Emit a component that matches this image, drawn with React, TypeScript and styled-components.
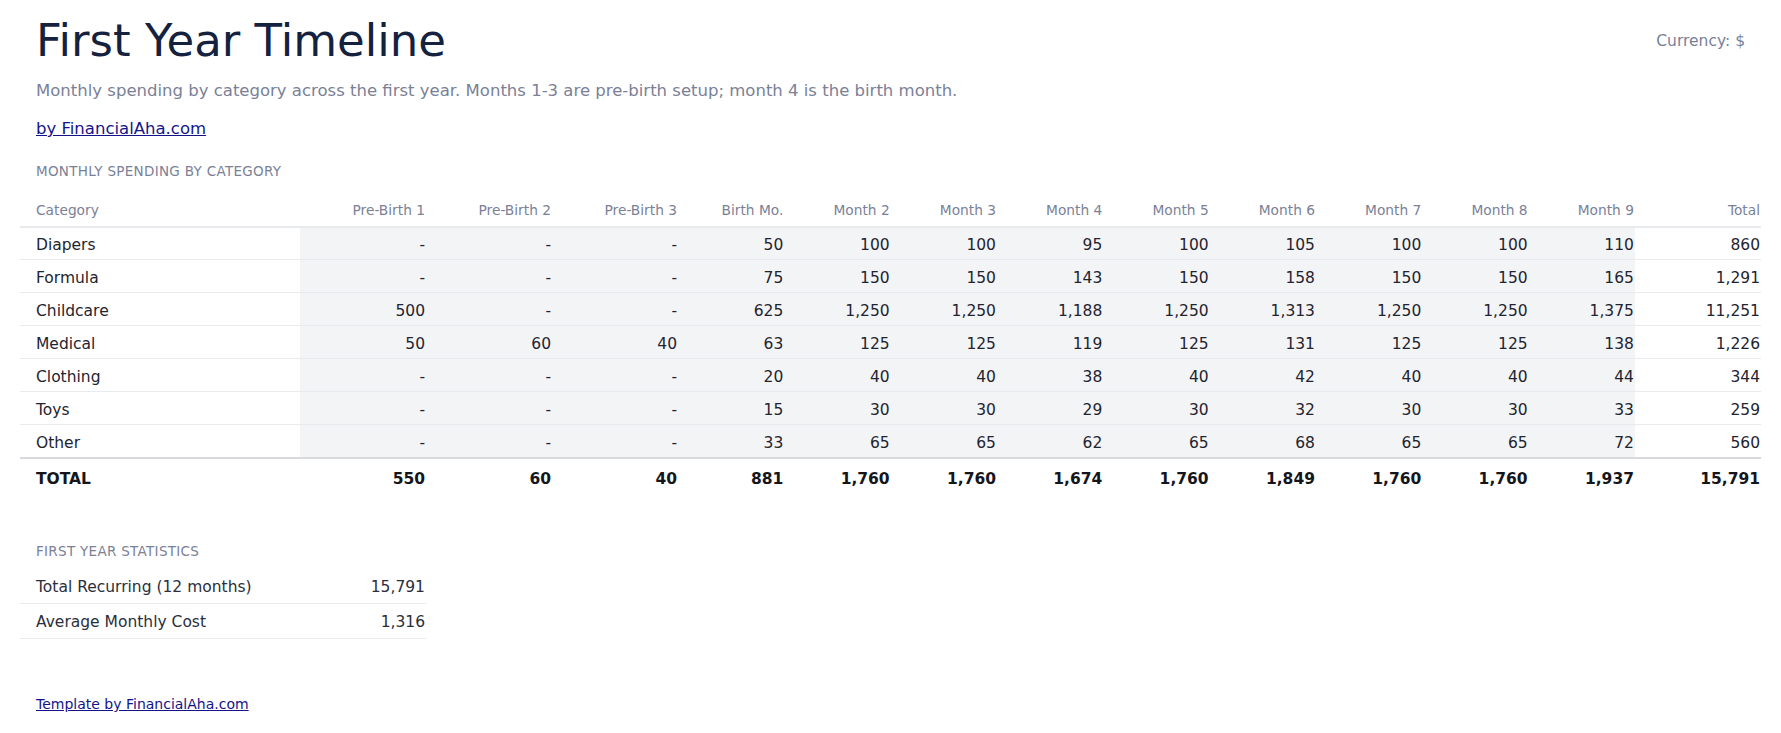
import React from "react";
import styled, { createGlobalStyle } from "styled-components";

const GlobalStyle = createGlobalStyle`
  html, body { margin: 0; padding: 0; background: #ffffff; }
  body { font-family: "DejaVu Sans", "Liberation Sans", sans-serif; color: #1f2937; }
`;

const Page = styled.div`
  padding: 15px 20px 20px;
  width: 1741px;
`;

const Header = styled.header`
  display: flex;
  justify-content: space-between;
  align-items: center;
  padding: 0 16px;
  height: 52px;
`;

const Title = styled.h1`
  margin: 0;
  font-size: 45px;
  font-weight: 400;
  line-height: 52px;
  color: #15223f;
`;

const Currency = styled.div`
  font-size: 15.5px;
  color: #7a8197;
  margin-top: -1px;
`;

const Intro = styled.div`
  padding: 0 16px;
`;

const Subtitle = styled.p`
  margin: 12px 0 0;
  font-size: 16.5px;
  line-height: 24px;
  color: #7a8197;
`;

const BrandLink = styled.a`
  display: inline-block;
  margin-top: 14px;
  font-size: 16.5px;
  line-height: 24px;
  color: #14148a;
`;

const SectionLabel = styled.div<{ $top: number }>`
  margin-top: ${(p) => p.$top}px;
  padding: 0 16px;
  font-size: 13.5px;
  letter-spacing: 0.3px;
  line-height: 20px;
  text-transform: uppercase;
  color: #7a8197;
`;

const Table = styled.table`
  margin-top: 12px;
  width: 1741px;
  border-collapse: collapse;
  table-layout: fixed;
`;

const HeadCell = styled.th<{ $left?: boolean }>`
  height: 33px;
  padding: 0 1px 0 16px;
  font-size: 13.75px;
  font-weight: 400;
  color: #7a8197;
  text-align: ${(p) => (p.$left ? "left" : "right")};
  border-bottom: 2px solid #e8eaee;
  white-space: nowrap;
`;

const BodyRow = styled.tr`
  &:not(:last-child) td {
    border-bottom: 1px solid #e9eaee;
  }
`;

const Cell = styled.td<{ $left?: boolean; $shaded?: boolean }>`
  height: 29px;
  padding: 3px 1px 0 16px;
  font-size: 15.5px;
  color: #1f2430;
  text-align: ${(p) => (p.$left ? "left" : "right")};
  background: ${(p) => (p.$shaded ? "#f3f4f6" : "transparent")};
  white-space: nowrap;
  &:first-child {
    padding-top: 3px;
  }
`;

const FirstBodyRow = styled(BodyRow)`
  td {
    height: 28px;
  }
`;

const TotalCell = styled.td<{ $left?: boolean }>`
  height: 38px;
  padding: 1px 1px 0 16px;
  font-size: 15.5px;
  font-weight: 700;
  color: #14161c;
  text-align: ${(p) => (p.$left ? "left" : "right")};
  border-top: 2px solid #d7d9de;
  white-space: nowrap;
`;

const StatsTable = styled.table`
  margin-top: 8px;
  width: 406px;
  border-collapse: collapse;
`;

const StatCell = styled.td<{ $left?: boolean }>`
  height: 32px;
  padding: 2px 1px 0 16px;
  font-size: 15.5px;
  color: #2a2f3b;
  text-align: ${(p) => (p.$left ? "left" : "right")};
  border-bottom: 1px solid #e9eaee;
`;

const Footer = styled.div`
  margin-top: 55px;
  padding: 0 16px;
`;

const FooterLink = styled.a`
  font-size: 14px;
  line-height: 20px;
  color: #14148a;
`;

const columns = [
  "Pre-Birth 1",
  "Pre-Birth 2",
  "Pre-Birth 3",
  "Birth Mo.",
  "Month 2",
  "Month 3",
  "Month 4",
  "Month 5",
  "Month 6",
  "Month 7",
  "Month 8",
  "Month 9",
];

const widths = [126, 126, 126, 106.33, 106.33, 106.33, 106.33, 106.34, 106.33, 106.33, 106.34, 106.33];

type Row = { name: string; values: string[]; total: string };

const rows: Row[] = [
  { name: "Diapers", values: ["-", "-", "-", "50", "100", "100", "95", "100", "105", "100", "100", "110"], total: "860" },
  { name: "Formula", values: ["-", "-", "-", "75", "150", "150", "143", "150", "158", "150", "150", "165"], total: "1,291" },
  { name: "Childcare", values: ["500", "-", "-", "625", "1,250", "1,250", "1,188", "1,250", "1,313", "1,250", "1,250", "1,375"], total: "11,251" },
  { name: "Medical", values: ["50", "60", "40", "63", "125", "125", "119", "125", "131", "125", "125", "138"], total: "1,226" },
  { name: "Clothing", values: ["-", "-", "-", "20", "40", "40", "38", "40", "42", "40", "40", "44"], total: "344" },
  { name: "Toys", values: ["-", "-", "-", "15", "30", "30", "29", "30", "32", "30", "30", "33"], total: "259" },
  { name: "Other", values: ["-", "-", "-", "33", "65", "65", "62", "65", "68", "65", "65", "72"], total: "560" },
];

const totals = ["550", "60", "40", "881", "1,760", "1,760", "1,674", "1,760", "1,849", "1,760", "1,760", "1,937"];

function DataRow({ row, first }: { row: Row; first: boolean }) {
  const RowEl = first ? FirstBodyRow : BodyRow;
  return (
    <RowEl>
      <Cell $left>{row.name}</Cell>
      {row.values.map((v, i) => (
        <Cell key={i} $shaded>
          {v}
        </Cell>
      ))}
      <Cell>{row.total}</Cell>
    </RowEl>
  );
}

export default function App() {
  return (
    <>
      <GlobalStyle />
      <Page>
        <Header>
          <Title>First Year Timeline</Title>
          <Currency>Currency: $</Currency>
        </Header>
        <Intro>
          <Subtitle>
            Monthly spending by category across the first year. Months 1-3 are pre-birth setup; month 4 is the birth month.
          </Subtitle>
          <BrandLink href="#">by FinancialAha.com</BrandLink>
        </Intro>

        <SectionLabel $top={20}>Monthly Spending by Category</SectionLabel>
        <Table>
          <colgroup>
            <col style={{ width: 280 }} />
            {widths.map((w, i) => (
              <col key={i} style={{ width: w }} />
            ))}
            <col style={{ width: 126 }} />
          </colgroup>
          <thead>
            <tr>
              <HeadCell $left>Category</HeadCell>
              {columns.map((c) => (
                <HeadCell key={c}>{c}</HeadCell>
              ))}
              <HeadCell>Total</HeadCell>
            </tr>
          </thead>
          <tbody>
            {rows.map((r, i) => (
              <DataRow key={r.name} row={r} first={i === 0} />
            ))}
          </tbody>
          <tfoot>
            <tr>
              <TotalCell $left>TOTAL</TotalCell>
              {totals.map((t, i) => (
                <TotalCell key={i}>{t}</TotalCell>
              ))}
              <TotalCell>15,791</TotalCell>
            </tr>
          </tfoot>
        </Table>

        <SectionLabel $top={43}>First Year Statistics</SectionLabel>
        <StatsTable>
          <tbody>
            <tr>
              <StatCell $left>Total Recurring (12 months)</StatCell>
              <StatCell>15,791</StatCell>
            </tr>
            <tr>
              <StatCell $left>Average Monthly Cost</StatCell>
              <StatCell>1,316</StatCell>
            </tr>
          </tbody>
        </StatsTable>

        <Footer>
          <FooterLink href="#">Template by FinancialAha.com</FooterLink>
        </Footer>
      </Page>
    </>
  );
}
